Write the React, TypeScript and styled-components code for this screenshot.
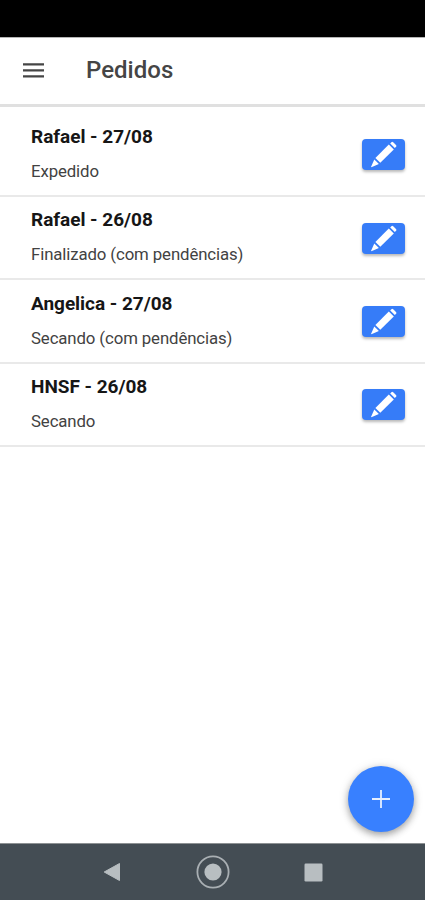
import React from "react";
import styled, { createGlobalStyle } from "styled-components";

const GlobalStyle = createGlobalStyle`
  * { box-sizing: border-box; }
  body { margin: 0; background: #fff; font-family: Roboto, "Liberation Sans", sans-serif; }
  button { font: inherit; border: 0; padding: 0; cursor: pointer; }
`;

const Screen = styled.div`
  position: relative;
  display: flex;
  flex-direction: column;
  width: 425px;
  height: 900px;
  overflow: hidden;
  background: #fff;
`;

const StatusBar = styled.div`
  height: 37px;
  flex: none;
  background: #000;
`;

const Header = styled.header`
  display: flex;
  align-items: center;
  flex: none;
  height: 70px;
  padding: 0 0 3px 23px;
  border-top: 1px solid #b5b5b5;
  border-bottom: 3px solid #e0e0e0;
`;

const MenuButton = styled.button`
  display: flex;
  width: 21px;
  height: 16px;
  margin-top: 1px;
  background: none;
`;

const Title = styled.h1`
  margin: 0 0 0 42px;
  font-size: 24px;
  font-weight: 500;
  line-height: 30px;
  letter-spacing: 0.02px;
  color: #454545;
`;

const List = styled.ul`
  flex: 1;
  margin: 0;
  padding: 6.5px 0 0;
  list-style: none;
`;

const Row = styled.li`
  display: flex;
  align-items: flex-start;
  justify-content: space-between;
  height: 83.4px;
  padding: 0 20px 0 31px;
  border-bottom: 2px solid #e9e9e9;
`;

const RowText = styled.div`
  display: flex;
  flex-direction: column;
  gap: 10.1px;
  padding-top: 11.4px;
`;

const Name = styled.h2`
  margin: 0;
  font-size: 19px;
  font-weight: 700;
  line-height: 24px;
  letter-spacing: -0.03px;
  color: #161616;
`;

const Status = styled.p`
  margin: 0;
  font-size: 16.8px;
  line-height: 24px;
  letter-spacing: -0.11px;
  color: #424242;
`;

const EditButton = styled.button`
  display: flex;
  width: 43px;
  height: 31px;
  margin-top: 25.8px;
  border-radius: 4px;
  background: #367cf8;
  box-shadow: 0 2px 3px rgba(0, 0, 0, 0.28);
`;

const AddButton = styled.button`
  position: absolute;
  right: 11px;
  bottom: 68px;
  display: flex;
  align-items: center;
  justify-content: center;
  width: 66px;
  height: 66px;
  border-radius: 50%;
  background: #3880ff;
  box-shadow: 0 3px 7px rgba(0, 0, 0, 0.32), 0 1px 12px rgba(0, 0, 0, 0.1);
`;

const NavBar = styled.nav`
  display: grid;
  grid-template-columns: repeat(3, 101px);
  justify-content: center;
  align-items: center;
  justify-items: center;
  flex: none;
  height: 57px;
  border-top: 1px solid #8d9193;
  background: #444d54;
`;

const NavButton = styled.button`
  display: flex;
  background: none;
`;

const orders = [
  { name: "Rafael - 27/08", status: "Expedido" },
  { name: "Rafael - 26/08", status: "Finalizado (com pendências)" },
  { name: "Angelica - 27/08", status: "Secando (com pendências)" },
  { name: "HNSF - 26/08", status: "Secando" },
];

const PencilIcon = () => (
  <svg width="43" height="31" viewBox="0 0 43 31" fill="#fff" aria-hidden="true">
    <path d="M13.4 18.9 26.8 5.4 31.8 10.4 18.3 23.8Z" />
    <path d="M12.3 20.4 16.9 25 9.9 28.1Q8.9 28.4 9.2 27.4Z" />
    <path d="M28.2 4.4 29.4 3.2Q30.3 2.4 31.2 3.2L34 6Q34.9 6.9 34.1 7.8L32.8 9Z" />
  </svg>
);

export default function App() {
  return (
    <>
      <GlobalStyle />
      <Screen>
        <StatusBar />
        <Header>
          <MenuButton aria-label="Menu">
            <svg width="21" height="16" viewBox="0 0 21 16" stroke="#454545" strokeWidth="2.2">
              <path d="M0 2.3H21M0 8.3H21M0 14.3H21" />
            </svg>
          </MenuButton>
          <Title>Pedidos</Title>
        </Header>
        <List>
          {orders.map((order) => (
            <Row key={order.name}>
              <RowText>
                <Name>{order.name}</Name>
                <Status>{order.status}</Status>
              </RowText>
              <EditButton aria-label="Editar">
                <PencilIcon />
              </EditButton>
            </Row>
          ))}
        </List>
        <NavBar>
          <NavButton aria-label="Voltar">
            <svg width="18" height="20" viewBox="0 0 18 20">
              <path d="M1.2 10 16.5 1.5V18.5Z" fill="#b8bec1" stroke="#b8bec1" strokeLinejoin="round" />
            </svg>
          </NavButton>
          <NavButton aria-label="Início">
            <svg width="34" height="34" viewBox="0 0 34 34">
              <circle cx="17" cy="17" r="15.6" fill="none" stroke="#a9afb3" strokeWidth="1.8" />
              <circle cx="17" cy="17" r="8.6" fill="#b8bec1" />
            </svg>
          </NavButton>
          <NavButton aria-label="Recentes">
            <svg width="19" height="19" viewBox="0 0 19 19">
              <rect x="0.5" y="0.5" width="18" height="18" rx="1.2" fill="#b8bec1" />
            </svg>
          </NavButton>
        </NavBar>
        <AddButton aria-label="Adicionar">
          <svg width="18" height="18" viewBox="0 0 18 18" stroke="#e6efff" strokeWidth="1.8">
            <path d="M9 0V18M0 9H18" />
          </svg>
        </AddButton>
      </Screen>
    </>
  );
}
